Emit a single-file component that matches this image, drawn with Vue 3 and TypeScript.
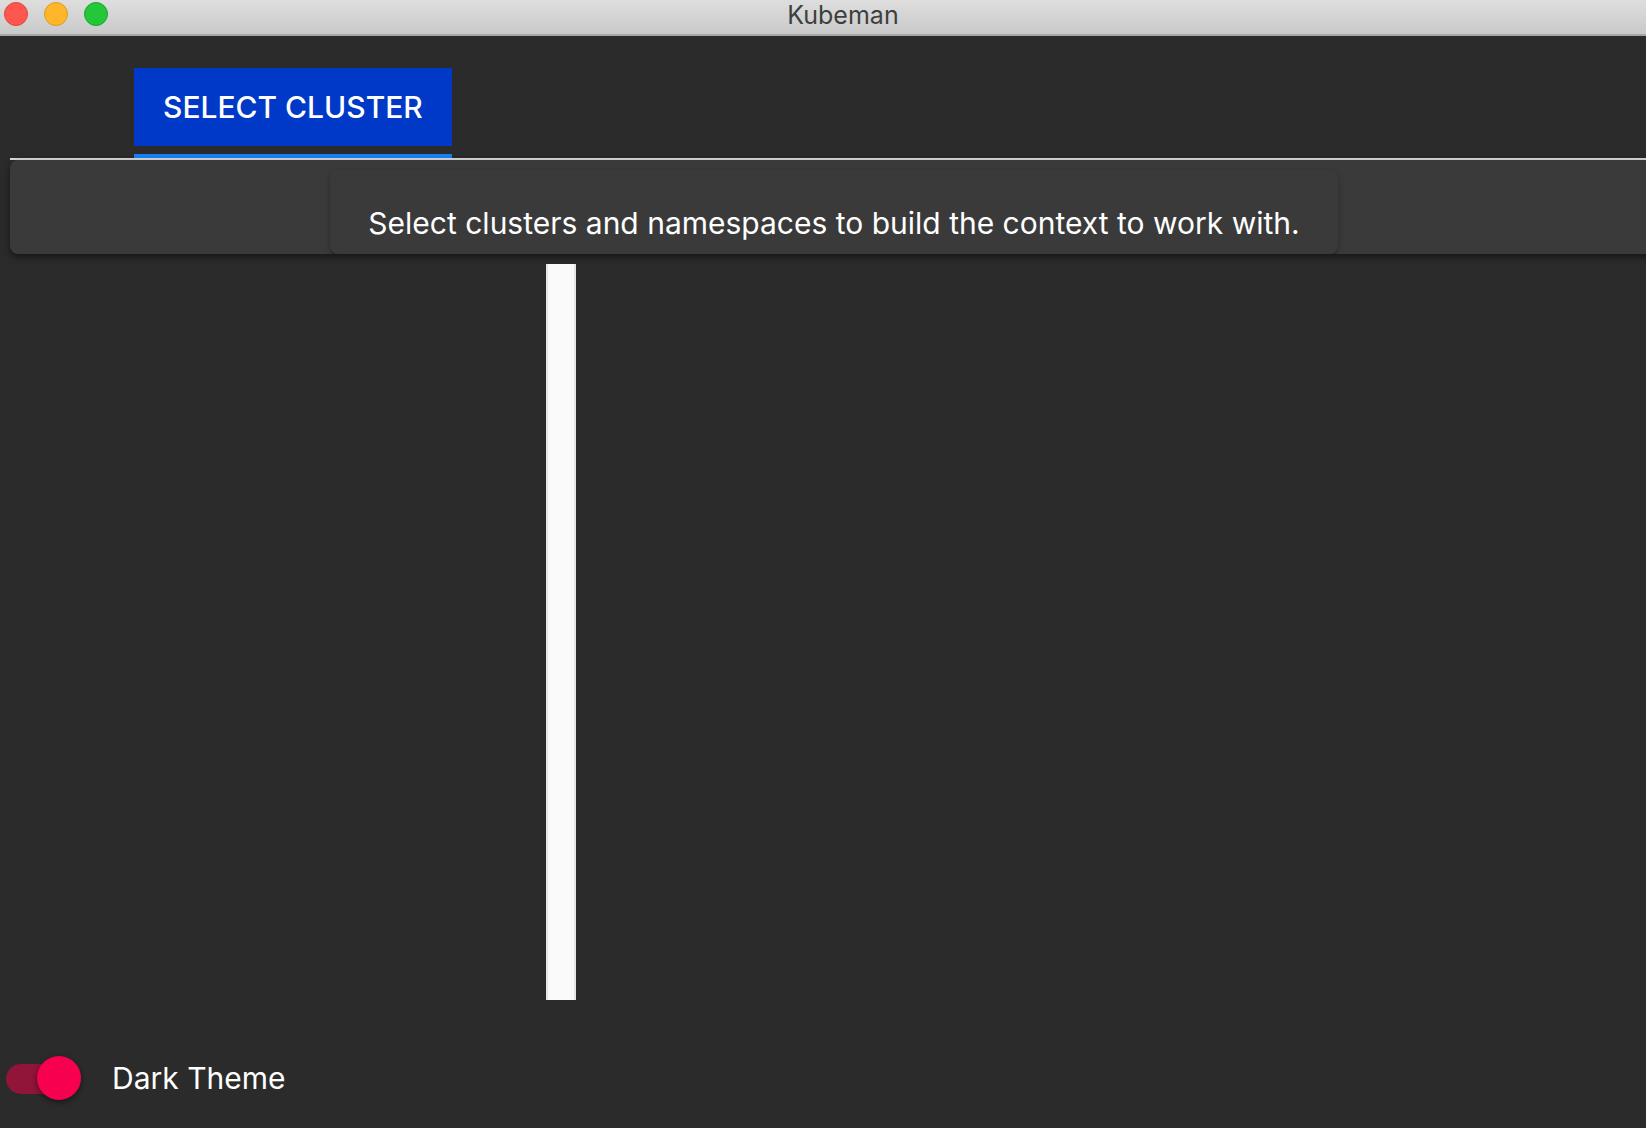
<script setup lang="ts">
import { ref } from 'vue'

const tabs = ['Select Cluster']
const activeTab = ref(tabs[0])
const darkTheme = ref(true)
</script>

<template>
  <div class="window" :class="{ light: !darkTheme }">
    <header class="titlebar">
      <div class="lights">
        <button class="light-btn close" type="button" aria-label="Close"></button>
        <button class="light-btn minimize" type="button" aria-label="Minimize"></button>
        <button class="light-btn zoom" type="button" aria-label="Zoom"></button>
      </div>
      <h1 class="title">Kubeman</h1>
    </header>

    <nav class="tabs">
      <div v-for="tab in tabs" :key="tab" class="tab" :class="{ active: tab === activeTab }">
        <button class="tab-btn" type="button" @click="activeTab = tab">{{ tab }}</button>
      </div>
    </nav>

    <section class="paper context">
      <p class="paper message">Select clusters and namespaces to build the context to work with.</p>
    </section>

    <main class="split">
      <div class="pane"></div>
      <div class="divider"></div>
      <div class="pane"></div>
    </main>

    <footer class="footer">
      <label class="switch">
        <input v-model="darkTheme" class="switch-input" type="checkbox" />
        <span>Dark Theme</span>
      </label>
    </footer>
  </div>
</template>

<style>
body {
  margin: 0;
  background: #2b2b2b;
}
</style>

<style scoped>
.window {
  display: flex;
  flex-direction: column;
  min-height: 100vh;
  overflow: hidden;
  background: #2b2b2b;
  color: #fff;
  font-family: Inter, "Liberation Sans", sans-serif;
  font-size: 30px;
}

.window.light {
  background: #fafafa;
  color: #222;
}

.titlebar {
  display: flex;
  box-sizing: border-box;
  height: 36px;
  border-bottom: 2px solid #a6a6a6;
  background: linear-gradient(#dedede, #c9c9c9);
}

.lights {
  display: flex;
  gap: 16px;
  padding: 2px 4px;
}

.light-btn {
  box-sizing: border-box;
  width: 24px;
  height: 24px;
  padding: 0;
  border: 1px solid;
  border-radius: 50%;
}

.close {
  border-color: #e0443e;
  background: #ff564f;
}

.minimize {
  border-color: #dc9a1f;
  background: #ffb62b;
}

.zoom {
  border-color: #17a62b;
  background: #24c738;
}

.title {
  flex: 1;
  margin: 0 72px 0 0;
  color: #3d3f3f;
  font-size: 25px;
  font-weight: 400;
  line-height: 30px;
  text-align: center;
}

.tabs {
  display: flex;
  margin-left: 10px;
  padding: 32px 0 0 124px;
  border-bottom: 2px solid #dcdcdc;
}

.tab {
  padding-bottom: 8px;
  border-bottom: 4px solid transparent;
}

.tab.active {
  border-color: #1683fb;
}

.tab-btn {
  display: block;
  height: 78px;
  padding: 0 29px;
  border: 0;
  background: #0039c7;
  color: #fff;
  font: inherit;
  font-weight: 500;
  line-height: 78px;
  text-transform: uppercase;
}

.paper {
  border-radius: 8px;
  background: #3a3a3a;
  box-shadow: 0 2px 6px rgba(0, 0, 0, 0.2), 0 2px 2px rgba(0, 0, 0, 0.14), 0 4px 2px -2px rgba(0, 0, 0, 0.12);
}

.light .paper {
  background: #fff;
}

.context {
  display: flex;
  justify-content: center;
  overflow: hidden;
  margin: 0 -12px 10px 10px;
  padding-top: 10px;
  box-shadow: 0 2px 10px rgba(0, 0, 0, 0.3), 0 4px 4px rgba(0, 0, 0, 0.2);
}

.message {
  margin: 0;
  padding: 33px 38px 11px;
  line-height: 40px;
}

.split {
  display: grid;
  flex: 1;
  grid-template-columns: 1fr 30px 2fr;
  margin: 0 -2px 0 10px;
}

.divider {
  box-sizing: border-box;
  border: solid #e6e6e6;
  border-width: 0 2px;
  background: #fafafa;
}

.footer {
  padding: 56px 6px 28px;
}

.switch {
  display: flex;
  align-items: center;
  gap: 30px;
  width: fit-content;
}

.switch-input {
  position: relative;
  width: 76px;
  height: 44px;
  margin: 0;
  appearance: none;
}

.switch-input::before {
  content: "";
  position: absolute;
  inset: 8px 8px 6px 0;
  border-radius: 15px;
  background: #777;
}

.switch-input::after {
  content: "";
  position: absolute;
  top: 0;
  left: 0;
  width: 44px;
  height: 44px;
  border-radius: 50%;
  background: #ccc;
  box-shadow: 0 2px 6px rgba(0, 0, 0, 0.3), 0 2px 4px rgba(0, 0, 0, 0.2);
}

.switch-input:checked::before {
  background: #901538;
}

.switch-input:checked::after {
  left: 31px;
  background: #f7004f;
}
</style>
